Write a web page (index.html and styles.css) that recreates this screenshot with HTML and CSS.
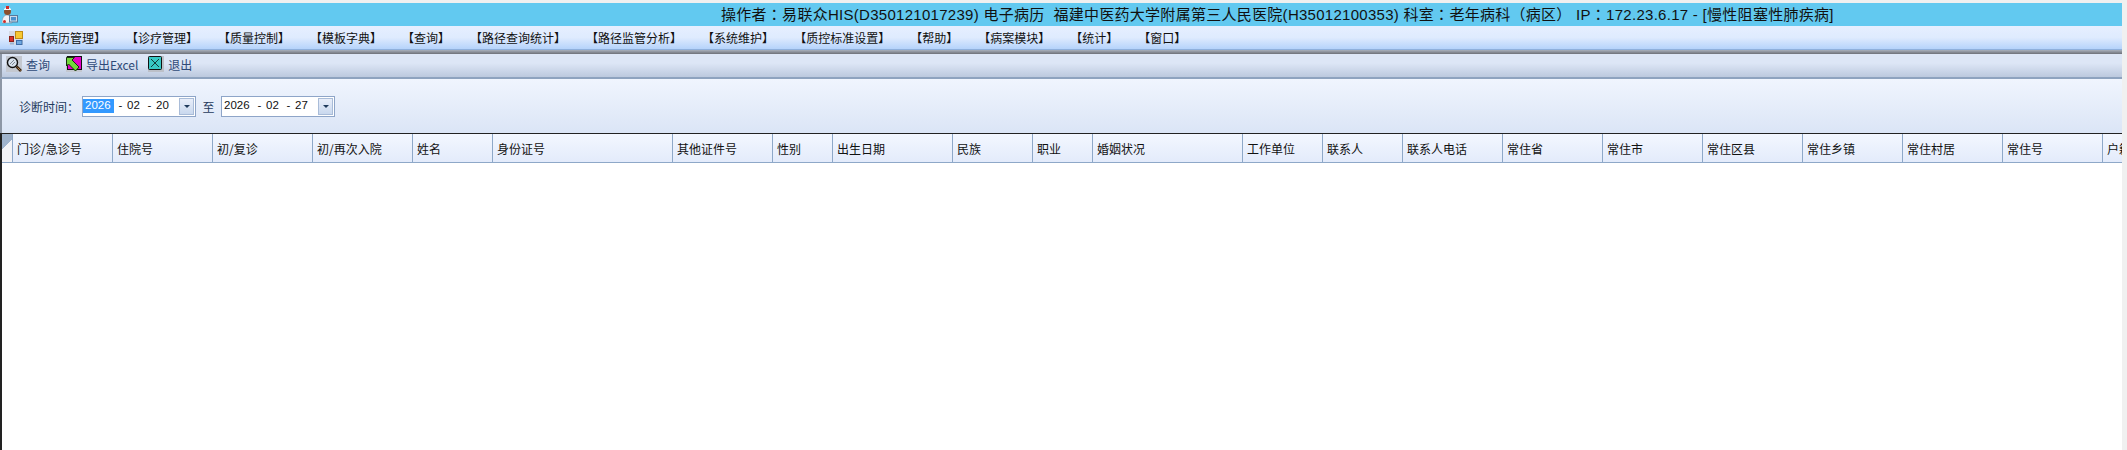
FILE: index.html
```html
<!DOCTYPE html>
<html lang="zh-CN">
<head>
<meta charset="utf-8">
<title>电子病历</title>
<link rel="stylesheet" href="styles.css">
</head>
<body>
<div class="app">
  <div class="titlebar">
    <svg class="app-icon" width="16" height="18" viewBox="0 0 16 18"><path d="M0 17c0-5 2-8 5-8s5 3 5 8z" fill="#f2f2f4" stroke="#7c8794" stroke-width=".5"/><circle cx="5.500" cy="5.500" r="3.500" fill="#8a4f2c"/><path d="M2 3l3.500-3L9 3v1H2z" fill="#f6f6f6"/><path d="M4 0h3v3H4z" fill="#cf2c28"/><circle cx="2.500" cy="15.500" r="1.500" fill="#cf2c28"/><rect x="7.500" y="9.500" width="8" height="6.500" fill="#cfdbe8" stroke="#55799c"/><rect x="9" y="11" width="5" height="3.500" fill="#4a90cc"/></svg>
    <div class="title" lang="zh-TW">操作者：易联众HIS(D350121017239) 电子病历&nbsp; 福建中医药大学附属第三人民医院(H35012100353) 科室：老年病科（病区） IP：172.23.6.17 - [慢性阻塞性肺疾病]</div>
  </div>
  <div class="menubar">
    <svg class="menu-icon" width="14" height="14" viewBox="0 0 14 14"><rect width="14" height="14" fill="#d5dae4"/><rect x="6.500" y=".5" width="7" height="7" fill="#f6c832" stroke="#c08a14"/><rect x=".5" y="5.500" width="4" height="5" fill="#d8302a" stroke="#8c2018"/><rect x="7.500" y="9.500" width="5.500" height="4" fill="#6fa8e0" stroke="#3c6ca8"/><rect x="1" y="11.500" width="4" height="2" fill="#9ab4d4"/></svg>
    <nav class="menu">
      <span class="menu-item">【病历管理】</span>
      <span class="menu-item">【诊疗管理】</span>
      <span class="menu-item">【质量控制】</span>
      <span class="menu-item">【模板字典】</span>
      <span class="menu-item">【查询】</span>
      <span class="menu-item">【路径查询统计】</span>
      <span class="menu-item">【路径监管分析】</span>
      <span class="menu-item">【系统维护】</span>
      <span class="menu-item">【质控标准设置】</span>
      <span class="menu-item">【帮助】</span>
      <span class="menu-item">【病案模块】</span>
      <span class="menu-item">【统计】</span>
      <span class="menu-item">【窗口】</span>
    </nav>
  </div>
  <div class="divider"></div>
  <div class="toolbar">
    <button class="tool tool-search">
      <svg width="16" height="16" viewBox="0 0 16 16"><rect width="16" height="16" fill="#c4c8d0"/><circle cx="6.500" cy="6.500" r="5" fill="#d8e2ee" stroke="#111" stroke-width="1.400"/><path d="M4 8l4-4M6 9l3-3" stroke="#7f8894"/><path d="M10.500 10.500l4.500 4.500" stroke="#3a2410" stroke-width="2.600"/><path d="M11.500 11.500l3 3" stroke="#d09a5c" stroke-width=".8"/></svg>
      <span>查询</span>
    </button>
    <button class="tool tool-export">
      <svg width="16" height="16" viewBox="0 0 16 16"><rect width="16" height="16" fill="#c4c8d0"/><rect x="1.500" y=".5" width="14" height="13" fill="#e400c8" stroke="#111"/><path d="M.5 1.500h8L6 4l7 7-3.500 4-7-7L.5 10z" fill="#72d83c" stroke="#16300c"/></svg>
      <span>导出Excel</span>
    </button>
    <button class="tool tool-exit">
      <svg width="16" height="16" viewBox="0 0 16 16"><rect width="16" height="16" fill="#bcc0c8"/><rect x=".5" y=".5" width="13" height="13" rx="1" fill="#38c8c4" stroke="#111"/><path d="M3 3l8 8M11 3l-8 8" stroke="#123c3a"/></svg>
      <span>退出</span>
    </button>
  </div>
  <div class="filter">
    <label class="filter-label">诊断时间：</label>
    <div class="date">
      <span class="date-text"><span class="seg-year seg-sel">2026</span><span class="seg-dash">-</span><span class="seg-num">02</span><span class="seg-dash">-</span><span class="seg-num">20</span></span>
      <span class="date-btn"><i class="caret"></i></span>
    </div>
    <span class="to">至</span>
    <div class="date">
      <span class="date-text"><span class="seg-year">2026</span><span class="seg-dash">-</span><span class="seg-num">02</span><span class="seg-dash">-</span><span class="seg-num">27</span></span>
      <span class="date-btn"><i class="caret"></i></span>
    </div>
  </div>
  <div class="grid-wrap">
    <div class="grid-head">
      <div class="corner"></div>
      <div class="col w100">门诊/急诊号</div>
      <div class="col w100">住院号</div>
      <div class="col w100">初/复诊</div>
      <div class="col w100">初/再次入院</div>
      <div class="col w80">姓名</div>
      <div class="col w180">身份证号</div>
      <div class="col w100">其他证件号</div>
      <div class="col w60">性别</div>
      <div class="col w120">出生日期</div>
      <div class="col w80">民族</div>
      <div class="col w60">职业</div>
      <div class="col w150">婚姻状况</div>
      <div class="col w80">工作单位</div>
      <div class="col w80">联系人</div>
      <div class="col w100">联系人电话</div>
      <div class="col w100">常住省</div>
      <div class="col w100">常住市</div>
      <div class="col w100">常住区县</div>
      <div class="col w100">常住乡镇</div>
      <div class="col w100">常住村居</div>
      <div class="col w100">常住号</div>
      <div class="col w100">户籍</div>
    </div>
  </div>
</div>
</body>
</html>
```
FILE: styles.css
```css
html, body { margin: 0; padding: 0; background: #f0f0f0; }
body { width: 2127px; height: 450px; overflow: hidden; font-family: "Noto Sans CJK SC", "Liberation Sans", sans-serif; font-size: 12px; color: #1f3a5c; }
.app { display: flex; flex-direction: column; width: 2122px; height: 450px; padding-top: 3px; box-sizing: border-box; }
.titlebar { height: 23px; flex: none; background: #62c9f0; display: flex; align-items: center; position: relative; }
.app-icon { margin-left: 2px; flex: none; }
.title { position: absolute; left: 721px; top: 0; line-height: 23px; font-size: 15px; letter-spacing: .28px; color: #111; white-space: nowrap; font-family: "Liberation Sans", "Noto Sans CJK TC", sans-serif; }
.menubar { height: 24px; flex: none; display: flex; align-items: center; background: linear-gradient(#e6efff, #dfebfe 50%, #b5d3fb); border-bottom: 1px solid #8fb0dc; box-sizing: border-box; }
.menu-icon { margin-left: 9px; flex: none; }
.menu { display: flex; margin-left: 1px; color: #111; }
.menu-item { padding: 0 10px; line-height: 20px; white-space: nowrap; }
.divider { height: 4px; flex: none; background: linear-gradient(#a9b0bb, #6d7078); }
.toolbar { height: 25px; flex: none; display: flex; align-items: center; padding: 0 0 3px 4px; background: linear-gradient(#dde6f6, #dde6f6 40%, #bcc9de); border-bottom: 2px solid #8ea3bf; border-left: 2px solid #8d97a6; box-sizing: border-box; }
.tool { display: flex; align-items: center; gap: 4px; border: 0; background: none; padding: 0; font: inherit; color: #2f4a78; }
.tool-export { margin-left: 16px; }
.tool-exit { margin-left: 10px; }
.filter { height: 54px; flex: none; display: flex; align-items: center; box-sizing: border-box; padding-left: 17px; background: linear-gradient(#f0f5fe, #dbe5f6); border-left: 2px solid #8d97a6; }
.filter-label { width: 63px; color: #1f3a5c; }
.date { width: 114px; height: 21px; box-sizing: border-box; border: 1px solid #8ea5c8; background: #fff; display: flex; align-items: center; justify-content: space-between; }
.date-text { font-family: "Liberation Sans", sans-serif; font-size: 11.5px; color: #111; display: flex; align-items: center; height: 14px; line-height: 13px; margin-bottom: 1px; }
.seg-year { width: 31px; height: 14px; padding-left: 2px; box-sizing: border-box; }
.seg-sel { background: #3399ff; color: #fff; }
.seg-dash { width: 13px; text-align: center; }
.seg-num { width: 16px; }
.date-btn { width: 15px; height: 17px; margin-right: 1px; border: 1px solid #a9bcd8; background: linear-gradient(#e8eefa, #c9d8ee); display: flex; align-items: center; justify-content: center; box-sizing: border-box; }
.caret { display: block; width: 0; height: 0; border: 3px solid transparent; border-top: 3px solid #1f3a5c; border-bottom: 0; }
.to { width: 25px; text-align: center; color: #1f3a5c; }
.grid-wrap { flex: 1; display: flex; overflow: hidden; background: #fff; border-left: 2px solid #222; border-top: 1px solid #222; min-height: 0; }
.grid-head { display: flex; height: 29px; flex: 1; min-width: 0; overflow: hidden; box-sizing: border-box; border-bottom: 1px solid #8ea8c8; background: linear-gradient(#f3f7ff, #e3ebfb); color: #111; }
.corner { width: 10px; flex: none; border-right: 1px solid #8ea8c8; background: linear-gradient(135deg, #9fb3cc 0 40%, #f3f3f6 40%); }
.col { flex: none; box-sizing: border-box; padding-left: 4px; border-right: 1px solid #8ea8c8; line-height: 29px; white-space: nowrap; overflow: hidden; }
.w60 { width: 60px; } .w80 { width: 80px; } .w100 { width: 100px; } .w120 { width: 120px; } .w150 { width: 150px; } .w180 { width: 180px; }
```
